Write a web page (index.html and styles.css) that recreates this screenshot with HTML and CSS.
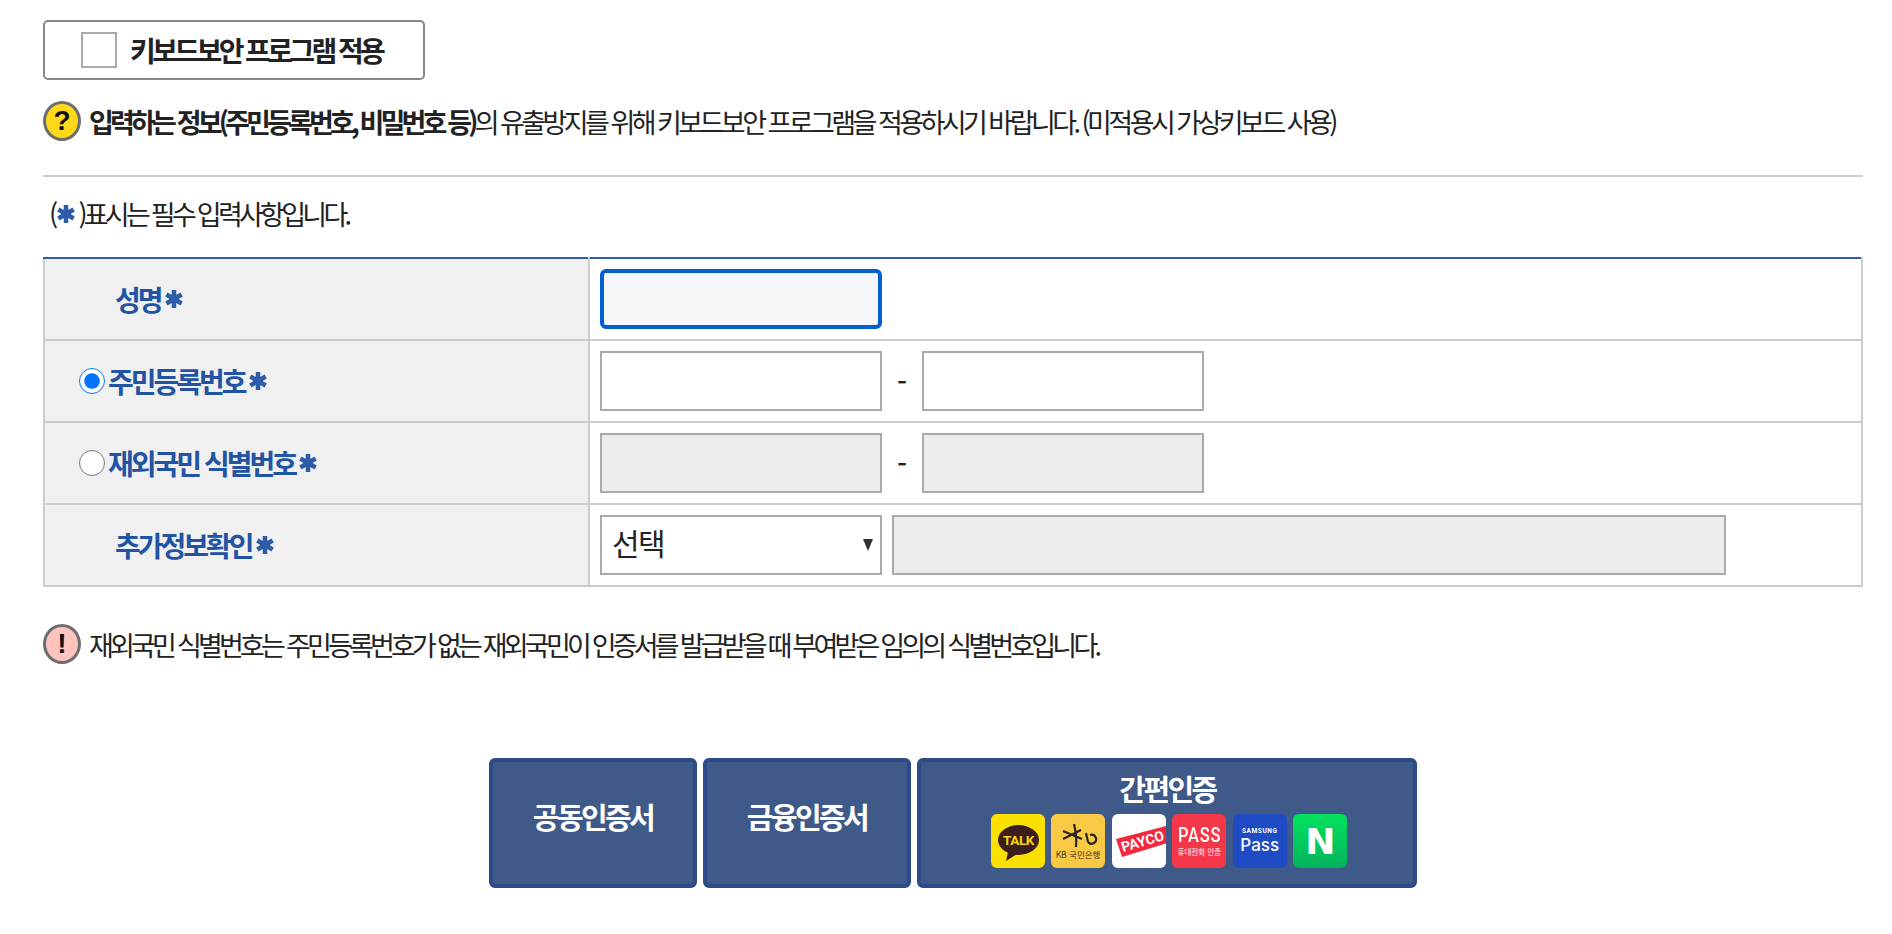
FILE: index.html
```html
<!DOCTYPE html>
<html lang="ko">
<head>
<meta charset="utf-8">
<title>인증</title>
<link rel="stylesheet" href="styles.css">
</head>
<body>
<svg class="defs" width="0" height="0" aria-hidden="true">
  <symbol id="star" viewBox="0 0 20 20">
    <circle cx="10" cy="10" r="5.500" fill="#2f5ca8" stroke="none"/>
    <g stroke-width="5">
      <path d="M10 0V20M1.500 5L18.500 15M18.500 5L1.500 15"/>
    </g>
  </symbol>
</svg>
<main class="page">
  <label class="kbd-btn"><span class="kbd-check"></span><span class="kbd-label">키보드보안 프로그램 적용</span></label>

  <p class="notice help">
    <span class="badge badge-q">?</span>
    <span class="notice-text"><b class="strong">입력하는 정보(주민등록번호, 비밀번호 등)</b>의 유출방지를 위해 키보드보안 프로그램을 적용하시기 바랍니다. (미적용시 가상키보드 사용)</span>
  </p>

  <hr class="rule">

  <p class="req">(<svg class="star star-req"><use href="#star"/></svg>)표시는 필수 입력사항입니다.</p>

  <table class="form">
    <tr>
      <th><span class="th-in th-plain">성명<svg class="star"><use href="#star"/></svg></span></th>
      <td><input class="field field-focus" type="text"></td>
    </tr>
    <tr>
      <th><span class="th-in"><input class="radio" type="radio" name="idt" checked>주민등록번호<svg class="star"><use href="#star"/></svg></span></th>
      <td><div class="cell"><input class="field" type="text"><span class="dash">-</span><input class="field" type="text"></div></td>
    </tr>
    <tr>
      <th><span class="th-in"><input class="radio" type="radio" name="idt">재외국민 식별번호<svg class="star"><use href="#star"/></svg></span></th>
      <td><div class="cell"><input class="field off" type="text"><span class="dash">-</span><input class="field off" type="text"></div></td>
    </tr>
    <tr>
      <th><span class="th-in th-plain">추가정보확인<svg class="star"><use href="#star"/></svg></span></th>
      <td><div class="cell cell-tight"><span class="select-wrap"><select class="select"><option>선택</option></select></span><input class="field field-wide off" type="text"></div></td>
    </tr>
  </table>

  <p class="notice warn">
    <span class="badge badge-x">!</span>
    <span class="notice-text">재외국민 식별번호는 주민등록번호가 없는 재외국민이 인증서를 발급받을 때 부여받은 임의의 식별번호입니다.</span>
  </p>

  <div class="actions">
    <button class="act act-s" type="button">공동인증서</button>
    <button class="act act-s" type="button">금융인증서</button>
    <button class="act act-l" type="button">
      <span class="act-title">간편인증</span>
      <span class="apps">
        <span class="app app-talk">
          <svg viewBox="0 0 54 54" class="app-svg"><ellipse cx="27.500" cy="26" rx="20.500" ry="15" fill="#3c1e1e"/><path d="M17 38L15 47L26 40Z" fill="#3c1e1e"/><text x="27.500" y="31" class="t-talk">TALK</text></svg>
        </span>
        <span class="app app-kb">
          <svg viewBox="0 0 54 54" class="app-svg"><path d="M12 17L31 25M23 10Q26 22 25 33M12 25L30 16M35 19L37 28M37 28a4.500 4.500 0 1 0 2 -7" fill="none" stroke="#2b2420" stroke-width="2.200"/><text x="27" y="44" class="t-kb">KB 국민은행</text></svg>
        </span>
        <span class="app app-payco">
          <svg viewBox="0 0 54 54" class="app-svg"><path d="M4 25L54 12V29.500L10 43Z" fill="#f4283c"/><text x="0" y="0" class="t-payco" transform="translate(11 38) rotate(-16)">PAYCO</text></svg>
        </span>
        <span class="app app-pass">
          <span class="pass-big">PASS</span>
          <span class="pass-small">휴대전화 인증</span>
        </span>
        <span class="app app-samsung">
          <span class="sam-small">SAMSUNG</span>
          <span class="sam-big">Pass</span>
        </span>
        <span class="app app-naver">N</span>
      </span>
    </button>
  </div>
</main>
</body>
</html>
```
FILE: styles.css
```css
* { box-sizing: border-box; }
html, body { margin: 0; padding: 0; background: #fff; }
body { font-family: "Noto Sans CJK KR", "Noto Sans", sans-serif; color: #222; height: 934px; overflow: hidden; }
.defs { position: absolute; }
.page { padding: 20px 29px 0 43px; }
.kbd-btn { display: flex; align-items: center; width: 382px; height: 60px; border: 2px solid #888; border-radius: 5px; padding-left: 36px; }
.kbd-check { width: 36px; height: 36px; border: 2px solid #aaa; background: #fff; margin-right: 13px; }
.kbd-label { font-size: 28px; font-weight: 700; letter-spacing: -3.600px; color: #222; }
.notice { display: flex; align-items: center; margin: 0; font-size: 27px; letter-spacing: -3.550px; line-height: 40px; color: #222; white-space: nowrap; }
.notice-text { padding-top: 2px; }
.help { margin-top: 20px; }
.strong { font-weight: 700; letter-spacing: -3.850px; }
.badge { flex: none; width: 38px; height: 40px; border-radius: 50%; border: 3px solid #6e6e6e; margin-right: 8px; display: flex; align-items: center; justify-content: center; font-family: "Liberation Sans", sans-serif; font-weight: 700; font-size: 28px; letter-spacing: 0; color: #111; }
.badge-q { background: #ffd91a; }
.badge-x { background: #ffc4c0; }
.rule { border: 0; height: 2px; background: #ccc; margin: 33px 0 0; }
.req { margin: 17px 0 0 6px; font-size: 27px; letter-spacing: -3.750px; line-height: 40px; white-space: nowrap; display: flex; align-items: center; height: 40px; }
.star { width: 18px; height: 18px; fill: none; stroke: #2f5ca8; margin-left: 4px; flex: none; filter: blur(.4px); }
.star-req { margin: 0 3px 0 3px; width: 18px; height: 18px; }
.form { width: 1820px; border-collapse: collapse; margin-top: 23px; border-top: 2px solid #2f5ca8; }
.form th, .form td { height: 82px; border: 2px solid #ccc; padding: 0; }
.form tr:first-child th, .form tr:first-child td { border-top: 2px solid #2f5ca8; }
.form th { width: 545px; background: #f0f0f0; text-align: left; font-size: 28px; font-weight: 700; color: #2353a3; letter-spacing: -3px; white-space: nowrap; }
.form td { padding-left: 10px; background: #fff; }
.th-in { display: flex; align-items: center; padding-left: 34px; }
.th-plain { padding-left: 70px; }
.radio { width: 26px; height: 26px; margin: 0 3px 0 0; flex: none; }
.cell { display: flex; align-items: center; }
.cell-tight { gap: 10px; }
.field { display: block; width: 282px; height: 60px; border: 2px solid #aaa; background: #fff; padding: 0; border-radius: 0; outline: 0; }
.field-focus { border: 4px solid #0060cf; border-radius: 6px; background: #f4f6f9; }
.off { background: #ececec; }
.field-wide { width: 834px; }
.dash { width: 40px; text-align: center; font-size: 28px; letter-spacing: 0; color: #222; font-weight: 500; }
.select-wrap { position: relative; display: block; width: 282px; height: 60px; }
.select-wrap::after { content: ""; position: absolute; right: 9px; top: 24px; border-left: 5px solid transparent; border-right: 5px solid transparent; border-top: 12px solid #333; }
.select { appearance: none; -webkit-appearance: none; display: block; width: 100%; height: 100%; border: 2px solid #aaa; border-radius: 0; background: #fff; font: inherit; font-size: 30px; letter-spacing: -1.500px; color: #222; padding: 0 0 6px 10px; outline: 0; }
.warn { margin-top: 36px; letter-spacing: -3.800px; }
.actions { display: flex; justify-content: center; gap: 6px; margin: 93px 0 0; width: 1820px; }
.act { height: 130px; border: 4px solid #2c4b87; border-radius: 6px; background: #3f5988; color: #fff; font: inherit; font-size: 29px; font-weight: 700; letter-spacing: -2.600px; padding: 0 0 14px; display: flex; flex-direction: column; align-items: center; justify-content: center; }
.act-s { width: 208px; }
.act-l { width: 500px; justify-content: flex-start; padding: 5px 0 0 4px; }
.act-title { line-height: 42px; margin-left: -3px; }
.apps { display: flex; gap: 6.500px; margin-top: 5px; }
.app { width: 54px; height: 54px; border-radius: 6px; display: flex; flex-direction: column; align-items: center; justify-content: center; overflow: hidden; letter-spacing: 0; }
.app-svg { display: block; width: 54px; height: 54px; }
.app-talk { background: #fbe100; }
.t-talk { font-family: "Roboto", sans-serif; font-size: 13.500px; font-weight: 700; fill: #f5d90a; text-anchor: middle; letter-spacing: -.4px; }
.app-kb { background: #f8c945; }
.t-kb { font-family: "Noto Sans CJK KR", sans-serif; font-size: 8.500px; font-weight: 400; fill: #3a3226; text-anchor: middle; letter-spacing: 0; }
.app-payco { background: #fff; }
.t-payco { font-family: "Roboto", sans-serif; font-size: 14px; font-weight: 700; fill: #fff; letter-spacing: 0; }
.app-pass { background: #f4384a; color: #fff; }
.pass-big { font-family: "Roboto", sans-serif; font-size: 21px; font-weight: 500; line-height: 20px; letter-spacing: 1px; transform: scaleX(.78); }
.pass-small { font-size: 7.500px; font-weight: 400; line-height: 11px; letter-spacing: 0; margin-top: 1px; }
.app-samsung { background: #1f4bc4; color: #fff; }
.sam-small { font-family: "Roboto", sans-serif; font-size: 6.500px; font-weight: 700; line-height: 9px; letter-spacing: .6px; }
.sam-big { font-family: "Inter", sans-serif; font-size: 17px; font-weight: 500; line-height: 19px; letter-spacing: 0; }
.app-naver { background: linear-gradient(#02e35e, #04b25c); color: #fff; font-family: "DejaVu Sans", sans-serif; font-weight: 700; font-size: 36px; }
```
